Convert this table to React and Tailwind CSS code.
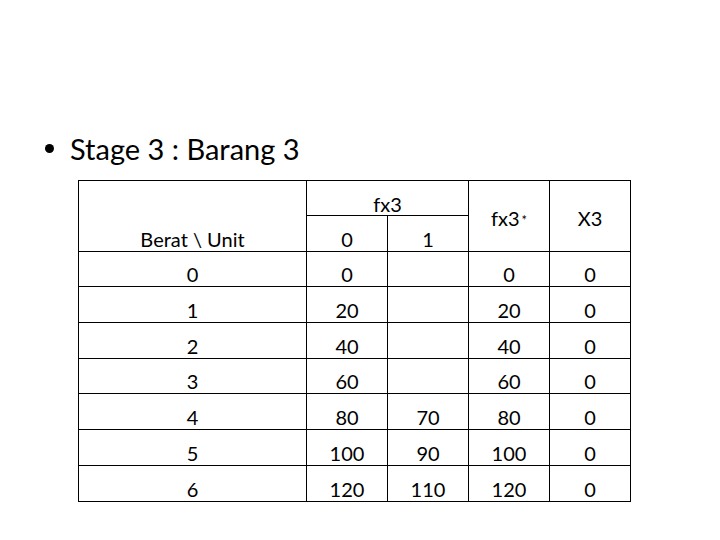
export default function App() {
  const rows = [
    ["0", "0", "", "0", "0"],
    ["1", "20", "", "20", "0"],
    ["2", "40", "", "40", "0"],
    ["3", "60", "", "60", "0"],
    ["4", "80", "70", "80", "0"],
    ["5", "100", "90", "100", "0"],
    ["6", "120", "110", "120", "0"],
  ];
  const cell =
    "border-r border-b border-black flex items-center justify-center leading-none pt-[10px]";
  return (
    <div
      className="w-[720px] h-[540px] bg-white text-black overflow-hidden"
      style={{ fontFamily: "Lato, 'Open Sans', sans-serif" }}
    >
      <div className="pt-[134px] pl-[45px] flex items-center h-[162px]">
        <div className="w-[9px] h-[9px] rounded-full bg-black mr-[16px]" />
        <div className="text-[29px] leading-none">Stage 3 : Barang 3</div>
      </div>
      <div className="ml-[78px] mt-[18px] w-[553px] border-l border-t border-black grid grid-cols-[228px_81px_81px_81px_81px] grid-rows-[35px_36px_35px_36px_36px_35px_36px_36px_36px] text-[20px]">
        <div className="row-span-2 border-r border-b border-black flex items-end justify-center leading-none pb-[2px]">
          Berat \ Unit
        </div>
        <div className="col-span-2 border-r border-b border-black flex items-center justify-center leading-none pt-[11px]">
          fx3
        </div>
        <div className="row-span-2 border-r border-b border-black flex items-center justify-center leading-none pt-[4px]">
          <span>
            fx3<span className="text-[13px] relative -top-[1px] ml-[2px]">*</span>
          </span>
        </div>
        <div className="row-span-2 border-r border-b border-black flex items-center justify-center leading-none pt-[4px]">
          X3
        </div>
        <div className={cell}>0</div>
        <div className={cell}>1</div>
        {rows.map((r, i) =>
          r.map((v, j) => (
            <div key={`${i}-${j}`} className={cell}>
              {v}
            </div>
          ))
        )}
      </div>
    </div>
  );
}
